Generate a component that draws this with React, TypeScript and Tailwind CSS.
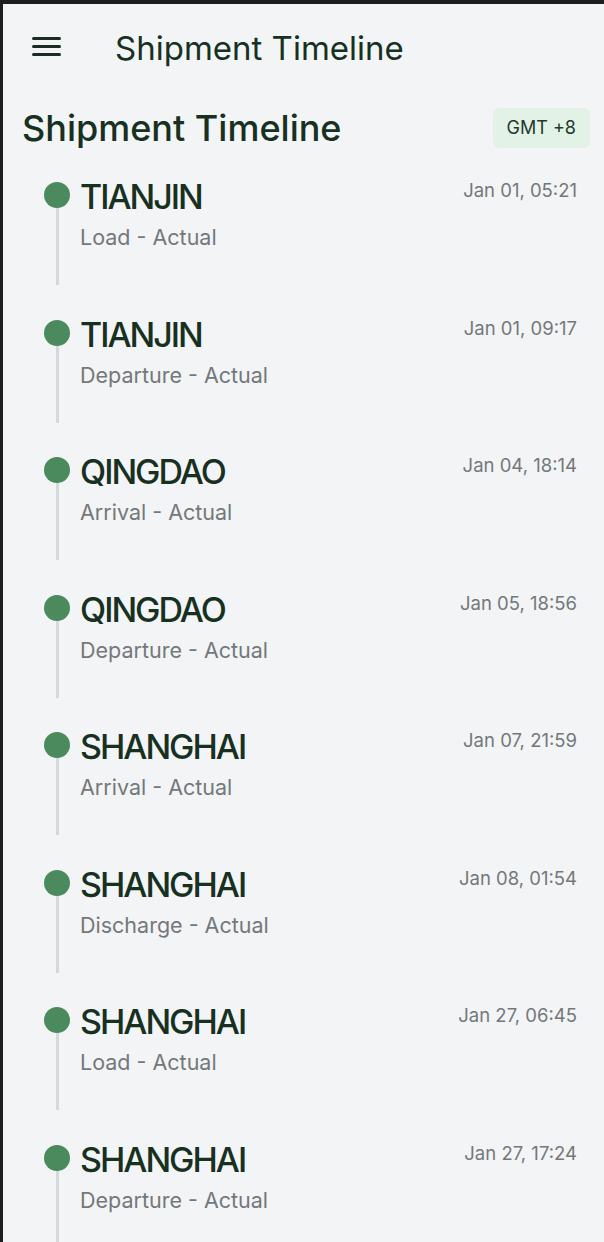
import React from 'react';

type Event = {
  city: string;
  label: string;
  time: string;
};

const events: Event[] = [
  { city: 'TIANJIN', label: 'Load - Actual', time: 'Jan 01, 05:21' },
  { city: 'TIANJIN', label: 'Departure - Actual', time: 'Jan 01, 09:17' },
  { city: 'QINGDAO', label: 'Arrival - Actual', time: 'Jan 04, 18:14' },
  { city: 'QINGDAO', label: 'Departure - Actual', time: 'Jan 05, 18:56' },
  { city: 'SHANGHAI', label: 'Arrival - Actual', time: 'Jan 07, 21:59' },
  { city: 'SHANGHAI', label: 'Discharge - Actual', time: 'Jan 08, 01:54' },
  { city: 'SHANGHAI', label: 'Load - Actual', time: 'Jan 27, 06:45' },
  { city: 'SHANGHAI', label: 'Departure - Actual', time: 'Jan 27, 17:24' },
];

function TimelineItem({ event }: { event: Event }) {
  return (
    <div className="flex h-[137.5px] pl-[41px] pr-[27px]">
      <div className="flex w-[26px] shrink-0 flex-col items-center">
        <div className="h-[26px] w-[26px] rounded-full bg-[#4a8a5c]" />
        <div className="h-[77px] w-[3px] bg-[#d6d9db]" />
      </div>
      <div className="ml-[10px] flex flex-1 items-start justify-between">
        <div>
          <div className="text-[34px] leading-[30px] font-medium tracking-[-2px] text-[#17301f]">
            {event.city}
          </div>
          <div className="mt-[12px] text-[21.5px] leading-[26px] text-[#74787b]">{event.label}</div>
        </div>
        <div className="-mt-[3px] text-[18.5px] leading-[22px] text-[#74787b]">{event.time}</div>
      </div>
    </div>
  );
}

export default function App() {
  return (
    <div
      className="min-h-[1242px] overflow-hidden border-t-4 border-l-[3px] border-[#1b1d1f] bg-[#f2f4f5]"
      style={{ fontFamily: 'Inter, "Noto Sans", sans-serif' }}
    >
      <header className="flex h-[88px] items-center pl-[29px]">
        <button type="button" className="mb-[4px] flex h-[30px] w-[30px] flex-col justify-center gap-[5px]">
          <span className="block h-[3px] w-[29px] rounded bg-[#1d2b24]" />
          <span className="block h-[3px] w-[29px] rounded bg-[#1d2b24]" />
          <span className="block h-[3px] w-[29px] rounded bg-[#1d2b24]" />
        </button>
        <h1 className="ml-[53px] text-[33px] leading-[36px] text-[#17301f]">Shipment Timeline</h1>
      </header>

      <div className="flex items-center justify-between pl-[19px] pr-[14px] pt-[15px]">
        <h2 className="text-[36px] leading-[42px] font-medium text-[#17301f]">Shipment Timeline</h2>
        <div className="rounded-md bg-[#e3f2e6] px-[14px] py-[9px] text-[18px] leading-[22px] text-[#1f3a2b]">
          GMT +8
        </div>
      </div>

      <div className="mt-[33px]">
        {events.map((event, index) => (
          <TimelineItem key={index} event={event} />
        ))}
      </div>
    </div>
  );
}
